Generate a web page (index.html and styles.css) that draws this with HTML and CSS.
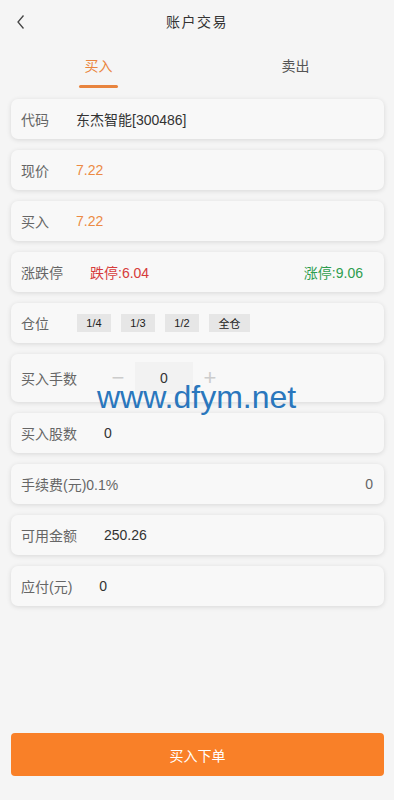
FILE: index.html
```html
<!DOCTYPE html>
<html lang="zh-CN">
<head>
    <meta charset="UTF-8">
    <meta name="viewport" content="width=device-width, initial-scale=1.0">
    <title>账户交易</title>
    <link rel="stylesheet" href="styles.css">
</head>
<body>
    <div class="page">
        <div class="header">
            <span class="back">
                <svg width="10" height="16" viewBox="0 0 10 16"><path d="M7.5 1.5 L2 8 L7.5 14.5" fill="none" stroke="#444" stroke-width="1.3"/></svg>
            </span>
            <div class="title">账户交易</div>
        </div>

        <div class="tabs">
            <div class="tab active">买入</div>
            <div class="tab">卖出</div>
        </div>

        <div class="list">
            <div class="card">
                <span class="label">代码</span>
                <span class="value">东杰智能[300486]</span>
            </div>
            <div class="card">
                <span class="label">现价</span>
                <span class="value orange">7.22</span>
            </div>
            <div class="card">
                <span class="label">买入</span>
                <span class="value orange">7.22</span>
            </div>
            <div class="card">
                <span class="label">涨跌停</span>
                <span class="value red">跌停:6.04</span>
                <span class="right green">涨停:9.06</span>
            </div>
            <div class="card">
                <span class="label">仓位</span>
                <div class="pills value">
                    <span class="pill">1/4</span>
                    <span class="pill">1/3</span>
                    <span class="pill">1/2</span>
                    <span class="pill">全仓</span>
                </div>
            </div>
            <div class="card tall">
                <span class="label">买入手数</span>
                <div class="stepper value">
                    <span class="step">&minus;</span>
                    <span class="num">0</span>
                    <span class="step">+</span>
                </div>
            </div>
            <div class="card">
                <span class="label">买入股数</span>
                <span class="value">0</span>
            </div>
            <div class="card">
                <span class="label">手续费(元)0.1%</span>
                <span class="right fee">0</span>
            </div>
            <div class="card">
                <span class="label">可用金额</span>
                <span class="value">250.26</span>
            </div>
            <div class="card">
                <span class="label">应付(元)</span>
                <span class="value">0</span>
            </div>
        </div>

        <button class="submit">买入下单</button>

        <div class="watermark">www.dfym.net</div>
    </div>
</body>
</html>
```

FILE: styles.css
```css
* { box-sizing: border-box; }
body { margin: 0; background: #f5f5f5; font-family: "Liberation Sans", "Noto Sans CJK SC", sans-serif; color: #333; }
.page { position: relative; min-height: 800px; display: flex; flex-direction: column; padding-bottom: 24px; }

.header { height: 42px; display: flex; align-items: center; justify-content: center; position: relative; }
.back { position: absolute; left: 16px; top: 14px; }
.title { font-size: 14px; letter-spacing: 1.5px; color: #333; }

.tabs { display: flex; height: 46px; }
.tab { flex: 1; display: flex; flex-direction: column; align-items: center; padding-top: 13px; font-size: 14px; color: #555; }
.tab.active { color: #ea8540; }
.tab.active::after { content: ""; width: 39px; height: 3px; border-radius: 2px; background: #e8843e; margin-top: 10px; }

.list { display: flex; flex-direction: column; gap: 11px; padding: 11px 10px 0 11px; }
.card { height: 40px; display: flex; align-items: center; padding: 0 11px 0 10px; background: #f8f8f8; border-radius: 7px; box-shadow: 0 1px 5px rgba(0, 0, 0, 0.12); font-size: 14px; }
.card.tall { height: 48px; }
.label { color: #666; }
.value { margin-left: 27px; color: #333; }
.right { margin-left: auto; }
.right.green { margin-right: 10px; }
.fee { color: #666; }
.orange { color: #ec8a44; }
.red { color: #d63b3b; }
.green { color: #2e9d4f; }

.pills { display: flex; gap: 10px; margin-left: 28px; }
.pill { width: 34px; height: 18px; background: #e6e6e6; font-size: 11px; color: #222; display: flex; align-items: center; justify-content: center; }
.pill:last-child { width: 41px; }

.stepper { display: flex; align-items: center; margin-left: 34px; }
.step { width: 14px; font-size: 22px; font-weight: 300; color: #ccc; text-align: center; line-height: 20px; }
.num { width: 58px; height: 32px; margin: 0 10px; background: #f2f2f2; display: flex; align-items: center; justify-content: center; font-size: 14px; color: #333; }

.submit { margin: auto 10px 0 11px; height: 43px; border: none; border-radius: 4px; background: #f98028; color: #fff; font-size: 14px; font-family: inherit; }

.watermark { position: absolute; left: 97px; top: 381px; font-size: 32px; line-height: 32px; color: #2a77bd; pointer-events: none; }
```
